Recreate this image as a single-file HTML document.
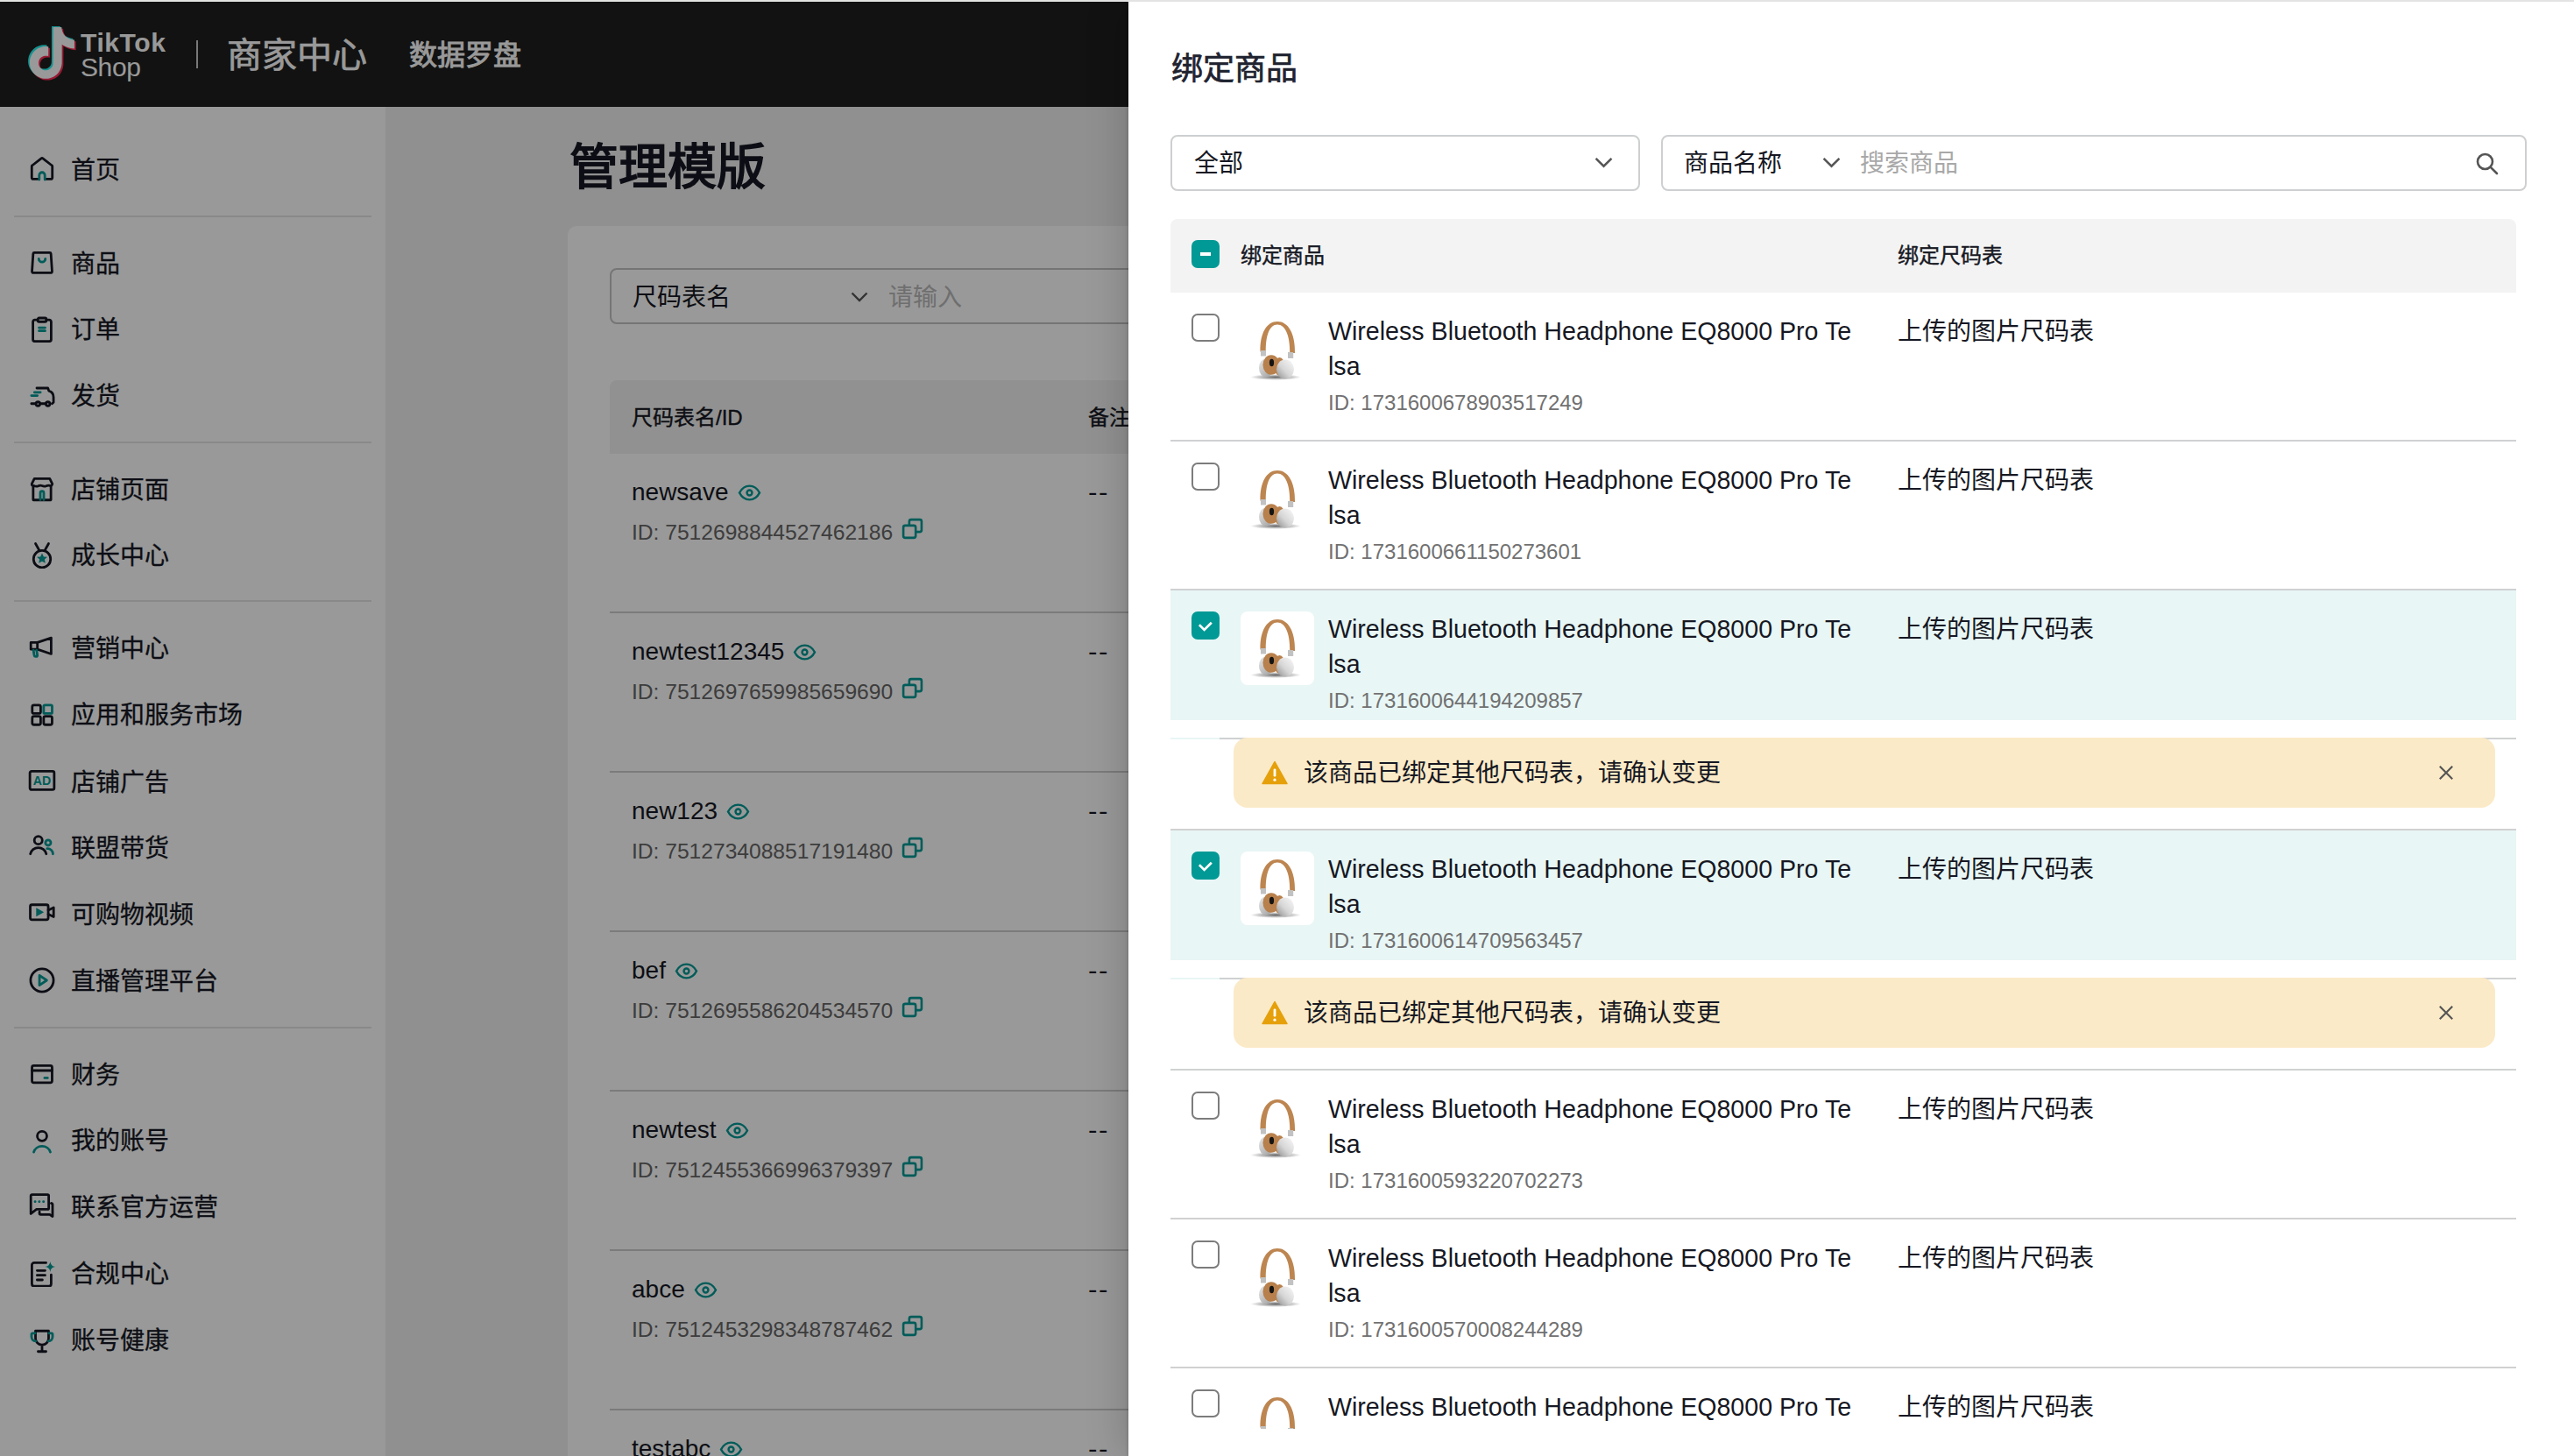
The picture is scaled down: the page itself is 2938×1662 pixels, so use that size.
<!DOCTYPE html>
<html lang="zh-CN"><head><meta charset="utf-8">
<style>
*{box-sizing:border-box;margin:0;padding:0}
html,body{width:2938px;height:1662px;overflow:hidden;background:#e2e4e2;font-family:"Liberation Sans",sans-serif;color:#121212}
.abs{position:absolute}
i{font-style:normal}
#hdr{position:absolute;left:0;top:2px;width:2938px;height:120px;background:#1f1f1f}
#side{position:absolute;left:0;top:122px;width:440px;height:1540px;background:#fff}
#main{position:absolute;left:440px;top:122px;width:2498px;height:1540px;background:#f1f1f1}
#mask{position:absolute;left:0;top:2px;width:2938px;height:1660px;background:rgba(0,0,0,.4)}
#drawer{position:absolute;left:1288px;top:2px;width:1650px;height:1660px;background:#fff;box-shadow:-8px 0 40px rgba(0,0,0,.16),-1px 0 3px rgba(0,0,0,.15);overflow:hidden}
.nav{position:absolute;left:0;width:440px;height:40px;line-height:40px;font-size:28px;color:#161823}
.nav span{position:absolute;left:81px;top:2px;-webkit-text-stroke:0.3px #161823}
.nav svg{position:absolute;left:32px;top:4px;width:32px;height:32px}
.div{position:absolute;left:16px;width:408px;height:2px;background:#e4e4e4}
/* content */
.ptitle{position:absolute;left:650px;top:153px;font-size:56px;line-height:76px;font-weight:700;color:#161823}
.card{position:absolute;left:648px;top:258px;width:1900px;height:1500px;background:#fff;border-radius:10px}
.csel{position:absolute;left:696px;top:306px;width:1000px;height:64px;border:2px solid #c4c4c4;border-radius:8px}
.csel .t{position:absolute;left:24px;top:12px;font-size:28px;line-height:40px;color:#161823}
.csel .ph{position:absolute;left:316px;top:12px;font-size:28px;line-height:40px;color:#b9b9b9}
.csel svg{position:absolute;left:273px;top:25px;width:20px;height:12px}
.cthead{position:absolute;left:696px;top:434px;width:1800px;height:84px;background:#f2f2f2;border-radius:8px 8px 0 0}
.cthead span{position:absolute;top:23px;font-size:24px;line-height:40px;font-weight:400;-webkit-text-stroke:0.4px #161823;color:#161823}
.crow{position:absolute;left:696px;width:1800px;height:180px}
.cname{position:absolute;left:25px;top:24px;font-size:28px;line-height:40px;color:#161823;white-space:nowrap}
.cname .eye{display:inline-block;width:27px;height:27px;margin-left:10px;vertical-align:-5px}
.cname svg,.cid svg{width:100%;height:100%;display:block}
.cid{position:absolute;left:25px;top:72px;font-size:24.6px;line-height:36px;color:#666;white-space:nowrap}
.cid .cpy{display:inline-block;width:25px;height:25px;margin-left:10px;vertical-align:0px}
.cdash{position:absolute;left:546px;top:24px;font-size:28px;line-height:40px;color:#161823;letter-spacing:1.5px;transform:scaleX(1.12);transform-origin:0 0}
.cdiv{position:absolute;left:696px;width:1800px;height:2px;background:#cdcdcd}
/* drawer */
.dtitle{position:absolute;left:1337px;top:51px;font-size:36px;line-height:56px;font-weight:400;color:#1f2330;-webkit-text-stroke:0.7px #1f2330}
.sel1{position:absolute;left:1336px;top:154px;width:536px;height:64px;border:2px solid #cdcfd1;border-radius:8px}
.sel2{position:absolute;left:1896px;top:154px;width:988px;height:64px;border:2px solid #cdcfd1;border-radius:8px}
.selt{position:absolute;top:11px;font-size:28px;line-height:40px;color:#161823}
.chev{position:absolute;top:23px;width:21px;height:13px}
.dthead{position:absolute;left:1336px;top:250px;width:1536px;height:84px;background:#f3f3f3;border-radius:8px 8px 0 0}
.dthead span{position:absolute;top:22px;font-size:24px;line-height:40px;font-weight:400;-webkit-text-stroke:0.4px #161823;color:#161823}
.drow{position:absolute;left:1336px;width:1536px}
.cb{position:absolute;left:1360px;width:32px;height:32px;border:2.5px solid #7c7c7c;border-radius:7px;background:#fff}
.cb.on{background:#009995;border:none}
.cb svg{width:32px;height:32px;display:block}
.pimg{position:absolute;left:1416px;width:84px;height:84px;background:#fff;border-radius:8px}
.pimg svg{width:84px;height:84px;display:block}
.pname{position:absolute;left:1516px;font-size:28.6px;line-height:40px;color:#161823;white-space:nowrap}
.pid{position:absolute;left:1516px;font-size:24px;line-height:36px;color:#717171;white-space:nowrap}
.psize{position:absolute;left:2166px;font-size:28px;line-height:40px;color:#161823}
.dline{position:absolute;left:1336px;width:1536px;height:2px;background:#d0d1d2}
.alert{position:absolute;left:1408px;width:1440px;height:80px;background:#fbeac7;border-radius:16px}
.alert .warn{position:absolute;left:32px;top:26px;width:30px;height:28px}
.alert span{position:absolute;left:80px;top:21px;font-size:28px;line-height:40px;color:#161823}
.alert .x{position:absolute;left:1375px;top:31px;width:18px;height:18px}
.clip{position:absolute;left:1288px;top:1631px;width:1650px;height:31px;background:#fff}
</style></head>
<body>
<div id="hdr">
  <svg class="abs" style="left:26px;top:28px" width="66" height="68" viewBox="0 0 66 68">
<g transform="translate(4,1) scale(2.45)"><path fill="#25f4ee" d="M12.525.02c1.31-.02 2.61-.01 3.91-.02.08 1.53.63 3.09 1.75 4.17 1.12 1.11 2.7 1.62 4.24 1.79v4.03c-1.44-.05-2.89-.35-4.2-.97-.57-.26-1.1-.59-1.62-.93-.01 2.92.01 5.84-.02 8.75-.08 1.4-.54 2.79-1.35 3.94-1.310 1.92-3.58 3.17-5.91 3.21-1.43.08-2.86-.31-4.08-1.030-2.02-1.19-3.44-3.37-3.65-5.71-.02-.5-.03-1-.01-1.49.18-1.9 1.12-3.72 2.58-4.96 1.66-1.44 3.98-2.13 6.15-1.72.02 1.48-.04 2.96-.04 4.44-.99-.32-2.15-.23-3.020.37-.63.41-1.11 1.04-1.36 1.75-.21.51-.15 1.07-.14 1.61.24 1.64 1.82 3.02 3.5 2.87 1.120-.01 2.19-.66 2.77-1.61.19-.33.4-.67.41-1.06.1-1.79.06-3.57.07-5.36.01-4.03-.01-8.05.02-12.07z" transform="translate(-0.7,-0.7)"/><path fill="#fe2c55" d="M12.525.02c1.31-.02 2.61-.01 3.91-.02.08 1.53.63 3.09 1.75 4.17 1.12 1.11 2.7 1.62 4.24 1.79v4.03c-1.44-.05-2.89-.35-4.2-.97-.57-.26-1.1-.59-1.62-.93-.01 2.92.01 5.84-.02 8.75-.08 1.4-.54 2.79-1.35 3.94-1.310 1.92-3.58 3.17-5.91 3.21-1.43.08-2.86-.31-4.08-1.030-2.02-1.19-3.44-3.37-3.65-5.71-.02-.5-.03-1-.01-1.49.18-1.9 1.12-3.72 2.58-4.96 1.66-1.44 3.98-2.13 6.15-1.72.02 1.48-.04 2.96-.04 4.44-.99-.32-2.15-.23-3.020.37-.63.41-1.11 1.04-1.36 1.75-.21.51-.15 1.07-.14 1.61.24 1.64 1.82 3.02 3.5 2.87 1.120-.01 2.19-.66 2.77-1.61.19-.33.4-.67.41-1.06.1-1.79.06-3.57.07-5.36.01-4.03-.01-8.05.02-12.07z" transform="translate(0.7,0.7)"/><path fill="#fff" d="M12.525.02c1.31-.02 2.61-.01 3.91-.02.08 1.53.63 3.09 1.75 4.17 1.12 1.11 2.7 1.62 4.24 1.79v4.03c-1.44-.05-2.89-.35-4.2-.97-.57-.26-1.1-.59-1.62-.93-.01 2.92.01 5.84-.02 8.75-.08 1.4-.54 2.79-1.35 3.94-1.310 1.92-3.58 3.17-5.91 3.21-1.43.08-2.86-.31-4.08-1.030-2.02-1.19-3.44-3.37-3.65-5.71-.02-.5-.03-1-.01-1.49.18-1.9 1.12-3.72 2.58-4.96 1.66-1.44 3.98-2.13 6.15-1.72.02 1.48-.04 2.96-.04 4.44-.99-.32-2.15-.23-3.020.37-.63.41-1.11 1.04-1.36 1.75-.21.51-.15 1.07-.14 1.61.24 1.64 1.82 3.02 3.5 2.87 1.120-.01 2.19-.66 2.77-1.61.19-.33.4-.67.41-1.06.1-1.79.06-3.57.07-5.36.01-4.03-.01-8.05.02-12.07z"/></g></svg>
  <div class="abs" style="left:92px;top:30px;font-size:30px;line-height:34px;font-weight:700;color:#fff;letter-spacing:0.6px">TikTok</div>
  <div class="abs" style="left:92px;top:58px;font-size:30px;line-height:34px;color:#fff;letter-spacing:-0.4px">Shop</div>
  <div class="abs" style="left:224px;top:44px;width:2px;height:32px;background:#cacaca"></div>
  <div class="abs" style="left:259px;top:33px;font-size:40px;line-height:56px;color:#fff;-webkit-text-stroke:0.7px #fff">商家中心</div>
  <div class="abs" style="left:467px;top:37px;font-size:32px;line-height:48px;font-weight:400;color:#fff;-webkit-text-stroke:0.9px #fff">数据罗盘</div>
</div>
<div id="side">
<div class="nav" style="top:50.8px"><svg viewBox="0 0 24 24" fill="none" stroke-linecap="round" stroke-linejoin="round"><path stroke="#161823" stroke-width="2.1" d="M8.7 20.6 H4.5 a1.3 1.3 0 0 1 -1.3 -1.3 V9.8 a1.2 1.2 0 0 1 .5 -1 L11.3 2.9 a1.2 1.2 0 0 1 1.4 0 L20.3 8.8 a1.2 1.2 0 0 1 .5 1 V19.3 a1.3 1.3 0 0 1 -1.3 1.3 H15.3"/><path stroke="#009995" stroke-width="2.1" d="M9.6 21 V17.2 a2.4 2.4 0 0 1 4.8 0 V21"/></svg><span>首页</span></div>
<div class="nav" style="top:157.5px"><svg viewBox="0 0 24 24" fill="none" stroke-linecap="round" stroke-linejoin="round"><path stroke="#161823" stroke-width="2.1" d="M5.4 3.3 H18.6 a1 1 0 0 1 1 .9 L20.6 19.3 a1.2 1.2 0 0 1 -1.2 1.3 H4.6 a1.2 1.2 0 0 1 -1.2 -1.3 L4.4 4.2 a1 1 0 0 1 1 -.9 Z"/><path stroke="#009995" stroke-width="2.1" d="M9.2 8.6 a2.8 2.8 0 0 0 5.6 0"/></svg><span>商品</span></div>
<div class="nav" style="top:233.0px"><svg viewBox="0 0 24 24" fill="none" stroke-linecap="round" stroke-linejoin="round"><path stroke="#161823" stroke-width="2.1" d="M8.3 4.6 H5.8 a1.6 1.6 0 0 0 -1.6 1.6 V21.4 a1.6 1.6 0 0 0 1.6 1.6 H18.2 a1.6 1.6 0 0 0 1.6 -1.6 V6.2 a1.6 1.6 0 0 0 -1.6 -1.6 H15.7"/><rect stroke="#161823" stroke-width="2.1" x="8.4" y="3" width="7.2" height="3.2" rx="1"/><path stroke="#009995" stroke-width="2.1" d="M9.4 11.3 H14.6 M9.4 14 H14.6"/></svg><span>订单</span></div>
<div class="nav" style="top:308.6px"><svg viewBox="0 0 24 24" fill="none" stroke-linecap="round" stroke-linejoin="round"><path stroke="#161823" stroke-width="2.1" d="M7.5 6 H17 L17.8 8.3 Q21.8 9.5 21.8 13.8 V18.2 L20.6 19.3 M2.9 19.3 H6.6 M10.4 19.3 H15.2"/><circle stroke="#161823" stroke-width="2.1" cx="8.5" cy="19.5" r="1.7"/><circle stroke="#161823" stroke-width="2.1" cx="17" cy="19.5" r="1.7"/><path stroke="#009995" stroke-width="2.1" d="M5.5 9.6 H10.6 M2.9 12.4 H8"/></svg><span>发货</span></div>
<div class="nav" style="top:415.5px"><svg viewBox="0 0 24 24" fill="none" stroke-linecap="round" stroke-linejoin="round"><path stroke="#161823" stroke-width="2.1" d="M5.4 3.3 H18.6 L20.8 7.8 Q20.5 9.8 18.9 9.3 Q17.3 8.8 15.4 9.6 Q13.5 10.1 12 9.4 Q10.5 8.8 8.6 9.6 Q6.7 10.2 5.1 9.3 Q3.2 9.8 3.2 7.8 Z M4.4 9.8 V21.1 a.6 .6 0 0 0 .6 .6 H19 a.6 .6 0 0 0 .6 -.6 V9.8 M4.4 21.4 H19.6"/><path stroke="#009995" stroke-width="2.1" d="M10.5 21.4 V15.5 a1.5 1.5 0 0 1 3 0 V21.4"/></svg><span>店铺页面</span></div>
<div class="nav" style="top:491.0px"><svg viewBox="0 0 24 24" fill="none" stroke-linecap="round" stroke-linejoin="round"><circle stroke="#161823" stroke-width="2.1" cx="12" cy="15.9" r="7.3"/><path stroke="#161823" stroke-width="2.1" d="M6.4 2.6 L9.9 8.9 M17.6 2.6 L14.1 8.9"/><path fill="#009995" d="M12 10.9 L13.4 13.8 L16.5 14.1 L14.2 16.2 L14.8 19.3 L12 17.8 L9.2 19.3 L9.8 16.2 L7.5 14.1 L10.6 13.8 Z"/></svg><span>成长中心</span></div>
<div class="nav" style="top:597.0px"><svg viewBox="0 0 24 24" fill="none" stroke-linecap="round" stroke-linejoin="round"><path stroke="#161823" stroke-width="2.1" d="M2.4 7.8 H8 V13.6 H2.4 Z M8 7.8 L19.8 3.8 V17.6 L8 13.6"/><path stroke="#009995" stroke-width="2.1" d="M4.6 14.3 L5.3 18.8 a1.2 1.2 0 0 0 1.2 1 H7.1 a.9 .9 0 0 0 .9 -1 L7.3 14.3"/></svg><span>营销中心</span></div>
<div class="nav" style="top:673.0px"><svg viewBox="0 0 24 24" fill="none" stroke-linecap="round" stroke-linejoin="round"><rect stroke="#161823" stroke-width="2.1" x="3.6" y="4.4" width="7.2" height="7.2" rx="1.5"/><rect stroke="#009995" stroke-width="2.1" x="13.4" y="4.4" width="7.2" height="7.2" rx="1"/><rect stroke="#161823" stroke-width="2.1" x="3.6" y="14" width="7.2" height="7.2" rx="1.5"/><rect stroke="#161823" stroke-width="2.1" x="13.4" y="14" width="7.2" height="7.2" rx="1.5"/></svg><span>应用和服务市场</span></div>
<div class="nav" style="top:749.5px"><svg viewBox="0 0 24 24" fill="none" stroke-linecap="round" stroke-linejoin="round"><rect stroke="#161823" stroke-width="2.1" x="1.6" y="3.3" width="20.8" height="15.8" rx="1.4"/><text x="12" y="15.2" text-anchor="middle" font-family="Liberation Sans" font-weight="700" font-size="10.6" fill="#009995">AD</text></svg><span>店铺广告</span></div>
<div class="nav" style="top:824.5px"><svg viewBox="0 0 24 24" fill="none" stroke-linecap="round" stroke-linejoin="round"><circle stroke="#161823" stroke-width="2.1" cx="8.8" cy="6.1" r="3.4"/><path stroke="#161823" stroke-width="2.1" d="M2 17.8 a6.9 6.4 0 0 1 13.6 0"/><circle stroke="#009995" stroke-width="2.1" cx="17.2" cy="8.2" r="2.3"/><path stroke="#009995" stroke-width="2.1" d="M16.3 13.2 a4.6 4.6 0 0 1 5 4.6"/></svg><span>联盟带货</span></div>
<div class="nav" style="top:900.5px"><svg viewBox="0 0 24 24" fill="none" stroke-linecap="round" stroke-linejoin="round"><rect stroke="#161823" stroke-width="2.1" x="1.9" y="4.3" width="15.4" height="12.8" rx="1.5"/><path stroke="#161823" stroke-width="2.1" d="M17.3 9 L21.9 6.7 V14.7 L17.3 12.4"/><path fill="#009995" d="M7 7 L13.6 10.7 L7 14.4 Z"/></svg><span>可购物视频</span></div>
<div class="nav" style="top:976.5px"><svg viewBox="0 0 24 24" fill="none" stroke-linecap="round" stroke-linejoin="round"><circle stroke="#161823" stroke-width="2.1" cx="12" cy="12" r="9.8"/><path stroke="#009995" stroke-width="2.1" d="M9.8 7.8 L16 12 L9.8 16.2 Z"/></svg><span>直播管理平台</span></div>
<div class="nav" style="top:1083.8px"><svg viewBox="0 0 24 24" fill="none" stroke-linecap="round" stroke-linejoin="round"><rect stroke="#161823" stroke-width="2.1" x="3.4" y="4.8" width="17.2" height="14.6" rx="1.5"/><path stroke="#161823" stroke-width="2.1" d="M3.4 9 H20.6"/><path stroke="#009995" stroke-width="2.1" d="M14.2 15.3 H16.7"/></svg><span>财务</span></div>
<div class="nav" style="top:1159.0px"><svg viewBox="0 0 24 24" fill="none" stroke-linecap="round" stroke-linejoin="round"><circle stroke="#161823" stroke-width="2.1" cx="12" cy="8.9" r="4.1"/><path stroke="#009995" stroke-width="2.1" d="M4.9 22.6 a7.3 6.6 0 0 1 14.2 0"/></svg><span>我的账号</span></div>
<div class="nav" style="top:1235.0px"><svg viewBox="0 0 24 24" fill="none" stroke-linecap="round" stroke-linejoin="round"><path stroke="#161823" stroke-width="2.1" d="M2.4 3 a1 1 0 0 1 1 -1 H16.7 a1 1 0 0 1 1 1 V13.6 a1 1 0 0 1 -1 1 H7.3 L2.4 18.3 Z"/><path stroke="#161823" stroke-width="2.1" d="M19.8 9.4 a1 1 0 0 1 1.2 1 V20.7 L18.6 19 H10.8 a1 1 0 0 1 -1 -1 V16.7"/><path stroke="#009995" stroke-width="2.1" stroke-width="2.3" d="M6 8 h.1 M9.6 8 h.1 M13.2 8 h.1"/></svg><span>联系官方运营</span></div>
<div class="nav" style="top:1311.0px"><svg viewBox="0 0 24 24" fill="none" stroke-linecap="round" stroke-linejoin="round"><path stroke="#161823" stroke-width="2.1" d="M15.4 3.3 H5.3 a2 2 0 0 0 -2 2 V21.3 a2 2 0 0 0 2 2 H17.8 a2 2 0 0 0 2 -2 V13.6 M7.8 10 H14.6 M7.8 14 H14.6 M7.8 18 H12.3"/><path fill="#009995" d="M19 2.2 Q19.4 6.3 23.4 6.8 Q19.4 7.3 19 11.3 Q18.6 7.3 14.6 6.8 Q18.6 6.3 19 2.2 Z"/></svg><span>合规中心</span></div>
<div class="nav" style="top:1387.0px"><svg viewBox="0 0 24 24" fill="none" stroke-linecap="round" stroke-linejoin="round"><path stroke="#161823" stroke-width="2.1" d="M6.4 4.7 H17.6 V11 a5.6 5.6 0 0 1 -11.2 0 Z M12 16.8 V21.8 M8.6 22.3 H15.4"/><path stroke="#009995" stroke-width="2.1" d="M6.2 6.6 H3.9 a.9 .9 0 0 0 -.9 .9 V9.8 a3.6 3.6 0 0 0 3.5 3.6 M17.8 6.6 H20.1 a.9 .9 0 0 1 .9 .9 V9.8 a3.6 3.6 0 0 1 -3.5 3.6"/></svg><span>账号健康</span></div>
<div class="div" style="top:123.8px"></div>
<div class="div" style="top:381.7px"></div>
<div class="div" style="top:563.3px"></div>
<div class="div" style="top:1050.0px"></div>
</div>
<div id="main"></div>
<div class="ptitle">管理模版</div>
<div class="card"></div>
<div class="csel"><span class="t">尺码表名</span><svg class="chevs" viewBox="0 0 20 12" fill="none" stroke="#555" stroke-width="2.4"><path d="M1.5 1.5 L10 10 L18.5 1.5"/></svg><span class="ph">请输入</span></div>
<div class="cthead"><span style="left:25px">尺码表名/ID</span><span style="left:546px">备注</span></div>
<div class="crow" style="top:518px"><div class="cname">newsave<i class="eye"><svg viewBox="0 0 24 24" fill="none" stroke="#009995" stroke-width="2.2"><path d="M1.8 12 C4.5 6.8 8 5 12 5 C16 5 19.5 6.8 22.2 12 C19.5 17.2 16 19 12 19 C8 19 4.5 17.2 1.8 12 Z"/><circle cx="12" cy="12" r="2.6"/></svg></i></div><div class="cid">ID: 7512698844527462186<i class="cpy"><svg viewBox="0 0 24 24" fill="none" stroke="#009995" stroke-width="2.5" stroke-linejoin="round"><rect x="2" y="8.5" width="13.5" height="13.5" rx="2"/><path d="M8.5 8.5 V4 a2 2 0 0 1 2 -2 H20 a2 2 0 0 1 2 2 V13.5 a2 2 0 0 1 -2 2 H15.5"/></svg></i></div><div class="cdash">--</div></div>
<div class="cdiv" style="top:698px"></div>
<div class="crow" style="top:700px"><div class="cname">newtest12345<i class="eye"><svg viewBox="0 0 24 24" fill="none" stroke="#009995" stroke-width="2.2"><path d="M1.8 12 C4.5 6.8 8 5 12 5 C16 5 19.5 6.8 22.2 12 C19.5 17.2 16 19 12 19 C8 19 4.5 17.2 1.8 12 Z"/><circle cx="12" cy="12" r="2.6"/></svg></i></div><div class="cid">ID: 7512697659985659690<i class="cpy"><svg viewBox="0 0 24 24" fill="none" stroke="#009995" stroke-width="2.5" stroke-linejoin="round"><rect x="2" y="8.5" width="13.5" height="13.5" rx="2"/><path d="M8.5 8.5 V4 a2 2 0 0 1 2 -2 H20 a2 2 0 0 1 2 2 V13.5 a2 2 0 0 1 -2 2 H15.5"/></svg></i></div><div class="cdash">--</div></div>
<div class="cdiv" style="top:880px"></div>
<div class="crow" style="top:882px"><div class="cname">new123<i class="eye"><svg viewBox="0 0 24 24" fill="none" stroke="#009995" stroke-width="2.2"><path d="M1.8 12 C4.5 6.8 8 5 12 5 C16 5 19.5 6.8 22.2 12 C19.5 17.2 16 19 12 19 C8 19 4.5 17.2 1.8 12 Z"/><circle cx="12" cy="12" r="2.6"/></svg></i></div><div class="cid">ID: 7512734088517191480<i class="cpy"><svg viewBox="0 0 24 24" fill="none" stroke="#009995" stroke-width="2.5" stroke-linejoin="round"><rect x="2" y="8.5" width="13.5" height="13.5" rx="2"/><path d="M8.5 8.5 V4 a2 2 0 0 1 2 -2 H20 a2 2 0 0 1 2 2 V13.5 a2 2 0 0 1 -2 2 H15.5"/></svg></i></div><div class="cdash">--</div></div>
<div class="cdiv" style="top:1062px"></div>
<div class="crow" style="top:1064px"><div class="cname">bef<i class="eye"><svg viewBox="0 0 24 24" fill="none" stroke="#009995" stroke-width="2.2"><path d="M1.8 12 C4.5 6.8 8 5 12 5 C16 5 19.5 6.8 22.2 12 C19.5 17.2 16 19 12 19 C8 19 4.5 17.2 1.8 12 Z"/><circle cx="12" cy="12" r="2.6"/></svg></i></div><div class="cid">ID: 7512695586204534570<i class="cpy"><svg viewBox="0 0 24 24" fill="none" stroke="#009995" stroke-width="2.5" stroke-linejoin="round"><rect x="2" y="8.5" width="13.5" height="13.5" rx="2"/><path d="M8.5 8.5 V4 a2 2 0 0 1 2 -2 H20 a2 2 0 0 1 2 2 V13.5 a2 2 0 0 1 -2 2 H15.5"/></svg></i></div><div class="cdash">--</div></div>
<div class="cdiv" style="top:1244px"></div>
<div class="crow" style="top:1246px"><div class="cname">newtest<i class="eye"><svg viewBox="0 0 24 24" fill="none" stroke="#009995" stroke-width="2.2"><path d="M1.8 12 C4.5 6.8 8 5 12 5 C16 5 19.5 6.8 22.2 12 C19.5 17.2 16 19 12 19 C8 19 4.5 17.2 1.8 12 Z"/><circle cx="12" cy="12" r="2.6"/></svg></i></div><div class="cid">ID: 7512455366996379397<i class="cpy"><svg viewBox="0 0 24 24" fill="none" stroke="#009995" stroke-width="2.5" stroke-linejoin="round"><rect x="2" y="8.5" width="13.5" height="13.5" rx="2"/><path d="M8.5 8.5 V4 a2 2 0 0 1 2 -2 H20 a2 2 0 0 1 2 2 V13.5 a2 2 0 0 1 -2 2 H15.5"/></svg></i></div><div class="cdash">--</div></div>
<div class="cdiv" style="top:1426px"></div>
<div class="crow" style="top:1428px"><div class="cname">abce<i class="eye"><svg viewBox="0 0 24 24" fill="none" stroke="#009995" stroke-width="2.2"><path d="M1.8 12 C4.5 6.8 8 5 12 5 C16 5 19.5 6.8 22.2 12 C19.5 17.2 16 19 12 19 C8 19 4.5 17.2 1.8 12 Z"/><circle cx="12" cy="12" r="2.6"/></svg></i></div><div class="cid">ID: 7512453298348787462<i class="cpy"><svg viewBox="0 0 24 24" fill="none" stroke="#009995" stroke-width="2.5" stroke-linejoin="round"><rect x="2" y="8.5" width="13.5" height="13.5" rx="2"/><path d="M8.5 8.5 V4 a2 2 0 0 1 2 -2 H20 a2 2 0 0 1 2 2 V13.5 a2 2 0 0 1 -2 2 H15.5"/></svg></i></div><div class="cdash">--</div></div>
<div class="cdiv" style="top:1608px"></div>
<div class="crow" style="top:1610px"><div class="cname">testabc<i class="eye"><svg viewBox="0 0 24 24" fill="none" stroke="#009995" stroke-width="2.2"><path d="M1.8 12 C4.5 6.8 8 5 12 5 C16 5 19.5 6.8 22.2 12 C19.5 17.2 16 19 12 19 C8 19 4.5 17.2 1.8 12 Z"/><circle cx="12" cy="12" r="2.6"/></svg></i></div><div class="cdash">--</div></div>
<div class="cdiv" style="top:1790px"></div>
<div id="mask"></div>
<div id="drawer"></div>
<div class="dtitle">绑定商品</div>
<div class="sel1"><span class="selt" style="left:25px">全部</span><svg class="chev" style="left:482px" viewBox="0 0 20 12" fill="none" stroke="#555" stroke-width="2.4"><path d="M1.5 1.5 L10 10 L18.5 1.5"/></svg></div>
<div class="sel2"><span class="selt" style="left:24px">商品名称</span><svg class="chev" style="left:182px" viewBox="0 0 20 12" fill="none" stroke="#555" stroke-width="2.4"><path d="M1.5 1.5 L10 10 L18.5 1.5"/></svg><span class="selt" style="left:225px;color:#a8a8a8">搜索商品</span>
<svg class="abs" style="left:927px;top:17px;width:28px;height:28px" viewBox="0 0 28 28" fill="none" stroke="#555" stroke-width="2.6"><circle cx="11.5" cy="11.5" r="8.5"/><path d="M17.8 17.8 L25 25" stroke-linecap="round"/></svg></div>
<div class="dthead"><span style="left:80px">绑定商品</span><span style="left:830px">绑定尺码表</span>
<div class="abs" style="left:24px;top:24px;width:32px;height:32px;background:#009995;border-radius:7px"><div class="abs" style="left:10px;top:14px;width:12px;height:4px;background:#fff"></div></div></div>
<div class="drow" style="top:334px;height:148px;"></div>
<div class="cb" style="top:358px"></div>
<div class="pimg" style="top:358px"><svg viewBox="0 0 84 84"><defs><radialGradient id="sh" cx="50%" cy="50%" r="50%"><stop offset="0" stop-color="#000" stop-opacity=".6"/><stop offset="1" stop-color="#000" stop-opacity="0"/></radialGradient>
<linearGradient id="cup" x1="1" y1="0" x2="0" y2="1"><stop offset="0" stop-color="#fafafa"/><stop offset=".55" stop-color="#d6d6d6"/><stop offset="1" stop-color="#8e8e8e"/></linearGradient>
<linearGradient id="cupb" x1="0" y1="0" x2="1" y2="1"><stop offset="0" stop-color="#e8e8e8"/><stop offset="1" stop-color="#9c9c9c"/></linearGradient></defs>
<ellipse cx="40" cy="72.5" rx="29" ry="3.4" fill="url(#sh)"/>
<path d="M22.5 43.5 C22 22 30 9 42 9 C54 9 62.5 22 62 45 L56.3 45 C56.5 25 51 12.6 42 12.6 C33 12.6 28.6 25 28.8 43.5 Z" fill="#bd8550"/>
<path d="M23 42 H29 V48.5 H23 Z" fill="#c2c2c2"/><path d="M54 44 H60.2 V51 H54 Z" fill="#c2c2c2"/>
<ellipse cx="29" cy="62" rx="8" ry="10.5" fill="url(#cupb)"/>
<ellipse cx="35" cy="58.5" rx="9.5" ry="11.2" fill="#b8804c"/><ellipse cx="35.5" cy="56" rx="2.6" ry="4.2" fill="#141414"/>
<ellipse cx="44.5" cy="60.5" rx="6" ry="10.5" fill="#b8804c"/>
<ellipse cx="51" cy="63.5" rx="10" ry="11" fill="url(#cup)"/>
</svg></div>
<div class="pname" style="top:358px">Wireless Bluetooth Headphone EQ8000 Pro Te<br>lsa</div>
<div class="pid" style="top:442px">ID: 1731600678903517249</div>
<div class="psize" style="top:359px">上传的图片尺码表</div>
<div class="dline" style="top:502px"></div>
<div class="drow" style="top:504px;height:148px;"></div>
<div class="cb" style="top:528px"></div>
<div class="pimg" style="top:528px"><svg viewBox="0 0 84 84"><defs><radialGradient id="sh" cx="50%" cy="50%" r="50%"><stop offset="0" stop-color="#000" stop-opacity=".6"/><stop offset="1" stop-color="#000" stop-opacity="0"/></radialGradient>
<linearGradient id="cup" x1="1" y1="0" x2="0" y2="1"><stop offset="0" stop-color="#fafafa"/><stop offset=".55" stop-color="#d6d6d6"/><stop offset="1" stop-color="#8e8e8e"/></linearGradient>
<linearGradient id="cupb" x1="0" y1="0" x2="1" y2="1"><stop offset="0" stop-color="#e8e8e8"/><stop offset="1" stop-color="#9c9c9c"/></linearGradient></defs>
<ellipse cx="40" cy="72.5" rx="29" ry="3.4" fill="url(#sh)"/>
<path d="M22.5 43.5 C22 22 30 9 42 9 C54 9 62.5 22 62 45 L56.3 45 C56.5 25 51 12.6 42 12.6 C33 12.6 28.6 25 28.8 43.5 Z" fill="#bd8550"/>
<path d="M23 42 H29 V48.5 H23 Z" fill="#c2c2c2"/><path d="M54 44 H60.2 V51 H54 Z" fill="#c2c2c2"/>
<ellipse cx="29" cy="62" rx="8" ry="10.5" fill="url(#cupb)"/>
<ellipse cx="35" cy="58.5" rx="9.5" ry="11.2" fill="#b8804c"/><ellipse cx="35.5" cy="56" rx="2.6" ry="4.2" fill="#141414"/>
<ellipse cx="44.5" cy="60.5" rx="6" ry="10.5" fill="#b8804c"/>
<ellipse cx="51" cy="63.5" rx="10" ry="11" fill="url(#cup)"/>
</svg></div>
<div class="pname" style="top:528px">Wireless Bluetooth Headphone EQ8000 Pro Te<br>lsa</div>
<div class="pid" style="top:612px">ID: 1731600661150273601</div>
<div class="psize" style="top:529px">上传的图片尺码表</div>
<div class="dline" style="top:672px"></div>
<div class="drow" style="top:674px;height:148px;background:#e8f6f5;"></div>
<div class="cb on" style="top:698px"><svg viewBox="0 0 32 32"><path d="M8.9 15.2 L14.6 20.9 L22.8 12.7" fill="none" stroke="#fff" stroke-width="2.7" stroke-linecap="butt" stroke-linejoin="miter"/></svg></div>
<div class="pimg" style="top:698px"><svg viewBox="0 0 84 84"><defs><radialGradient id="sh" cx="50%" cy="50%" r="50%"><stop offset="0" stop-color="#000" stop-opacity=".6"/><stop offset="1" stop-color="#000" stop-opacity="0"/></radialGradient>
<linearGradient id="cup" x1="1" y1="0" x2="0" y2="1"><stop offset="0" stop-color="#fafafa"/><stop offset=".55" stop-color="#d6d6d6"/><stop offset="1" stop-color="#8e8e8e"/></linearGradient>
<linearGradient id="cupb" x1="0" y1="0" x2="1" y2="1"><stop offset="0" stop-color="#e8e8e8"/><stop offset="1" stop-color="#9c9c9c"/></linearGradient></defs>
<ellipse cx="40" cy="72.5" rx="29" ry="3.4" fill="url(#sh)"/>
<path d="M22.5 43.5 C22 22 30 9 42 9 C54 9 62.5 22 62 45 L56.3 45 C56.5 25 51 12.6 42 12.6 C33 12.6 28.6 25 28.8 43.5 Z" fill="#bd8550"/>
<path d="M23 42 H29 V48.5 H23 Z" fill="#c2c2c2"/><path d="M54 44 H60.2 V51 H54 Z" fill="#c2c2c2"/>
<ellipse cx="29" cy="62" rx="8" ry="10.5" fill="url(#cupb)"/>
<ellipse cx="35" cy="58.5" rx="9.5" ry="11.2" fill="#b8804c"/><ellipse cx="35.5" cy="56" rx="2.6" ry="4.2" fill="#141414"/>
<ellipse cx="44.5" cy="60.5" rx="6" ry="10.5" fill="#b8804c"/>
<ellipse cx="51" cy="63.5" rx="10" ry="11" fill="url(#cup)"/>
</svg></div>
<div class="pname" style="top:698px">Wireless Bluetooth Headphone EQ8000 Pro Te<br>lsa</div>
<div class="pid" style="top:782px">ID: 1731600644194209857</div>
<div class="psize" style="top:699px">上传的图片尺码表</div>
<div class="dline" style="top:842px;left:1336px;width:56px;background:#e8f6f5"></div>
<div class="dline" style="top:842px;left:1392px;width:1480px"></div>
<div class="alert" style="top:842px"><svg class="warn" viewBox="0 0 30 28"><path d="M15 1.5 L29 26.5 H1 Z" fill="#e5a00b" stroke="#e5a00b" stroke-width="1.5" stroke-linejoin="round"/><rect x="13.6" y="9.5" width="2.8" height="9" rx="1.2" fill="#fff"/><circle cx="15" cy="22.2" r="1.6" fill="#fff"/></svg><span>该商品已绑定其他尺码表，请确认变更</span><svg class="x" viewBox="0 0 20 20"><path d="M2 2 L18 18 M18 2 L2 18" stroke="#555" stroke-width="2.4"/></svg></div>
<div class="dline" style="top:946px"></div>
<div class="drow" style="top:948px;height:148px;background:#e8f6f5;"></div>
<div class="cb on" style="top:972px"><svg viewBox="0 0 32 32"><path d="M8.9 15.2 L14.6 20.9 L22.8 12.7" fill="none" stroke="#fff" stroke-width="2.7" stroke-linecap="butt" stroke-linejoin="miter"/></svg></div>
<div class="pimg" style="top:972px"><svg viewBox="0 0 84 84"><defs><radialGradient id="sh" cx="50%" cy="50%" r="50%"><stop offset="0" stop-color="#000" stop-opacity=".6"/><stop offset="1" stop-color="#000" stop-opacity="0"/></radialGradient>
<linearGradient id="cup" x1="1" y1="0" x2="0" y2="1"><stop offset="0" stop-color="#fafafa"/><stop offset=".55" stop-color="#d6d6d6"/><stop offset="1" stop-color="#8e8e8e"/></linearGradient>
<linearGradient id="cupb" x1="0" y1="0" x2="1" y2="1"><stop offset="0" stop-color="#e8e8e8"/><stop offset="1" stop-color="#9c9c9c"/></linearGradient></defs>
<ellipse cx="40" cy="72.5" rx="29" ry="3.4" fill="url(#sh)"/>
<path d="M22.5 43.5 C22 22 30 9 42 9 C54 9 62.5 22 62 45 L56.3 45 C56.5 25 51 12.6 42 12.6 C33 12.6 28.6 25 28.8 43.5 Z" fill="#bd8550"/>
<path d="M23 42 H29 V48.5 H23 Z" fill="#c2c2c2"/><path d="M54 44 H60.2 V51 H54 Z" fill="#c2c2c2"/>
<ellipse cx="29" cy="62" rx="8" ry="10.5" fill="url(#cupb)"/>
<ellipse cx="35" cy="58.5" rx="9.5" ry="11.2" fill="#b8804c"/><ellipse cx="35.5" cy="56" rx="2.6" ry="4.2" fill="#141414"/>
<ellipse cx="44.5" cy="60.5" rx="6" ry="10.5" fill="#b8804c"/>
<ellipse cx="51" cy="63.5" rx="10" ry="11" fill="url(#cup)"/>
</svg></div>
<div class="pname" style="top:972px">Wireless Bluetooth Headphone EQ8000 Pro Te<br>lsa</div>
<div class="pid" style="top:1056px">ID: 1731600614709563457</div>
<div class="psize" style="top:973px">上传的图片尺码表</div>
<div class="dline" style="top:1116px;left:1336px;width:56px;background:#e8f6f5"></div>
<div class="dline" style="top:1116px;left:1392px;width:1480px"></div>
<div class="alert" style="top:1116px"><svg class="warn" viewBox="0 0 30 28"><path d="M15 1.5 L29 26.5 H1 Z" fill="#e5a00b" stroke="#e5a00b" stroke-width="1.5" stroke-linejoin="round"/><rect x="13.6" y="9.5" width="2.8" height="9" rx="1.2" fill="#fff"/><circle cx="15" cy="22.2" r="1.6" fill="#fff"/></svg><span>该商品已绑定其他尺码表，请确认变更</span><svg class="x" viewBox="0 0 20 20"><path d="M2 2 L18 18 M18 2 L2 18" stroke="#555" stroke-width="2.4"/></svg></div>
<div class="dline" style="top:1220px"></div>
<div class="drow" style="top:1222px;height:148px;"></div>
<div class="cb" style="top:1246px"></div>
<div class="pimg" style="top:1246px"><svg viewBox="0 0 84 84"><defs><radialGradient id="sh" cx="50%" cy="50%" r="50%"><stop offset="0" stop-color="#000" stop-opacity=".6"/><stop offset="1" stop-color="#000" stop-opacity="0"/></radialGradient>
<linearGradient id="cup" x1="1" y1="0" x2="0" y2="1"><stop offset="0" stop-color="#fafafa"/><stop offset=".55" stop-color="#d6d6d6"/><stop offset="1" stop-color="#8e8e8e"/></linearGradient>
<linearGradient id="cupb" x1="0" y1="0" x2="1" y2="1"><stop offset="0" stop-color="#e8e8e8"/><stop offset="1" stop-color="#9c9c9c"/></linearGradient></defs>
<ellipse cx="40" cy="72.5" rx="29" ry="3.4" fill="url(#sh)"/>
<path d="M22.5 43.5 C22 22 30 9 42 9 C54 9 62.5 22 62 45 L56.3 45 C56.5 25 51 12.6 42 12.6 C33 12.6 28.6 25 28.8 43.5 Z" fill="#bd8550"/>
<path d="M23 42 H29 V48.5 H23 Z" fill="#c2c2c2"/><path d="M54 44 H60.2 V51 H54 Z" fill="#c2c2c2"/>
<ellipse cx="29" cy="62" rx="8" ry="10.5" fill="url(#cupb)"/>
<ellipse cx="35" cy="58.5" rx="9.5" ry="11.2" fill="#b8804c"/><ellipse cx="35.5" cy="56" rx="2.6" ry="4.2" fill="#141414"/>
<ellipse cx="44.5" cy="60.5" rx="6" ry="10.5" fill="#b8804c"/>
<ellipse cx="51" cy="63.5" rx="10" ry="11" fill="url(#cup)"/>
</svg></div>
<div class="pname" style="top:1246px">Wireless Bluetooth Headphone EQ8000 Pro Te<br>lsa</div>
<div class="pid" style="top:1330px">ID: 1731600593220702273</div>
<div class="psize" style="top:1247px">上传的图片尺码表</div>
<div class="dline" style="top:1390px"></div>
<div class="drow" style="top:1392px;height:148px;"></div>
<div class="cb" style="top:1416px"></div>
<div class="pimg" style="top:1416px"><svg viewBox="0 0 84 84"><defs><radialGradient id="sh" cx="50%" cy="50%" r="50%"><stop offset="0" stop-color="#000" stop-opacity=".6"/><stop offset="1" stop-color="#000" stop-opacity="0"/></radialGradient>
<linearGradient id="cup" x1="1" y1="0" x2="0" y2="1"><stop offset="0" stop-color="#fafafa"/><stop offset=".55" stop-color="#d6d6d6"/><stop offset="1" stop-color="#8e8e8e"/></linearGradient>
<linearGradient id="cupb" x1="0" y1="0" x2="1" y2="1"><stop offset="0" stop-color="#e8e8e8"/><stop offset="1" stop-color="#9c9c9c"/></linearGradient></defs>
<ellipse cx="40" cy="72.5" rx="29" ry="3.4" fill="url(#sh)"/>
<path d="M22.5 43.5 C22 22 30 9 42 9 C54 9 62.5 22 62 45 L56.3 45 C56.5 25 51 12.6 42 12.6 C33 12.6 28.6 25 28.8 43.5 Z" fill="#bd8550"/>
<path d="M23 42 H29 V48.5 H23 Z" fill="#c2c2c2"/><path d="M54 44 H60.2 V51 H54 Z" fill="#c2c2c2"/>
<ellipse cx="29" cy="62" rx="8" ry="10.5" fill="url(#cupb)"/>
<ellipse cx="35" cy="58.5" rx="9.5" ry="11.2" fill="#b8804c"/><ellipse cx="35.5" cy="56" rx="2.6" ry="4.2" fill="#141414"/>
<ellipse cx="44.5" cy="60.5" rx="6" ry="10.5" fill="#b8804c"/>
<ellipse cx="51" cy="63.5" rx="10" ry="11" fill="url(#cup)"/>
</svg></div>
<div class="pname" style="top:1416px">Wireless Bluetooth Headphone EQ8000 Pro Te<br>lsa</div>
<div class="pid" style="top:1500px">ID: 1731600570008244289</div>
<div class="psize" style="top:1417px">上传的图片尺码表</div>
<div class="dline" style="top:1560px"></div>
<div class="drow" style="top:1562px;height:148px;"></div>
<div class="cb" style="top:1586px"></div>
<div class="pimg" style="top:1586px"><svg viewBox="0 0 84 84"><defs><radialGradient id="sh" cx="50%" cy="50%" r="50%"><stop offset="0" stop-color="#000" stop-opacity=".6"/><stop offset="1" stop-color="#000" stop-opacity="0"/></radialGradient>
<linearGradient id="cup" x1="1" y1="0" x2="0" y2="1"><stop offset="0" stop-color="#fafafa"/><stop offset=".55" stop-color="#d6d6d6"/><stop offset="1" stop-color="#8e8e8e"/></linearGradient>
<linearGradient id="cupb" x1="0" y1="0" x2="1" y2="1"><stop offset="0" stop-color="#e8e8e8"/><stop offset="1" stop-color="#9c9c9c"/></linearGradient></defs>
<ellipse cx="40" cy="72.5" rx="29" ry="3.4" fill="url(#sh)"/>
<path d="M22.5 43.5 C22 22 30 9 42 9 C54 9 62.5 22 62 45 L56.3 45 C56.5 25 51 12.6 42 12.6 C33 12.6 28.6 25 28.8 43.5 Z" fill="#bd8550"/>
<path d="M23 42 H29 V48.5 H23 Z" fill="#c2c2c2"/><path d="M54 44 H60.2 V51 H54 Z" fill="#c2c2c2"/>
<ellipse cx="29" cy="62" rx="8" ry="10.5" fill="url(#cupb)"/>
<ellipse cx="35" cy="58.5" rx="9.5" ry="11.2" fill="#b8804c"/><ellipse cx="35.5" cy="56" rx="2.6" ry="4.2" fill="#141414"/>
<ellipse cx="44.5" cy="60.5" rx="6" ry="10.5" fill="#b8804c"/>
<ellipse cx="51" cy="63.5" rx="10" ry="11" fill="url(#cup)"/>
</svg></div>
<div class="pname" style="top:1586px">Wireless Bluetooth Headphone EQ8000 Pro Te<br>lsa</div>
<div class="psize" style="top:1587px">上传的图片尺码表</div>
<div class="dline" style="top:1730px"></div>
<div class="clip"></div>
<div class="abs" style="left:0;top:0;width:2938px;height:2px;background:#e2e4e2"></div>
</body></html>
